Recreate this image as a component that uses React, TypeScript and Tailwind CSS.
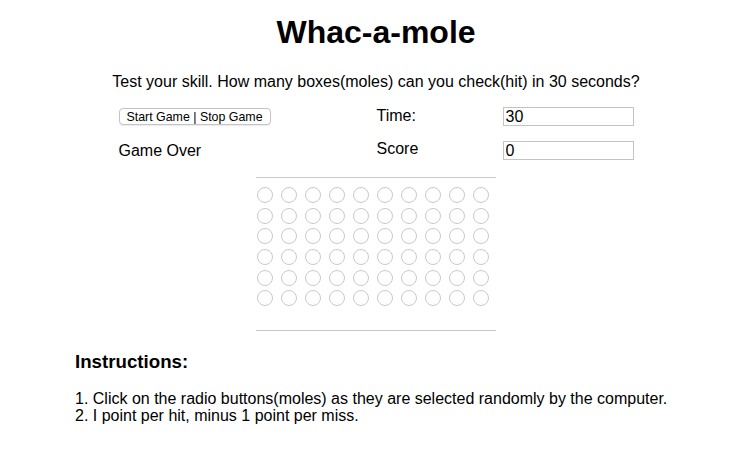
import React from "react";

export default function App() {
  const rows = Array.from({ length: 6 });
  const cols = Array.from({ length: 10 });
  return (
    <div
      className="w-[738px] h-[460px] bg-white text-black overflow-hidden"
      style={{ fontFamily: '"Liberation Sans", Arial, sans-serif' }}
    >
      <div className="flex flex-col items-center pl-[14px]">
        <h1 className="text-[32px] leading-[37px] font-bold mt-[14px]">Whac-a-mole</h1>
        <p className="text-[16px] leading-[18px] mt-[22px]">
          Test your skill. How many boxes(moles) can you check(hit) in 30 seconds?
        </p>
        <div className="grid grid-cols-[258px_126px_131px] grid-rows-[19px_19px] gap-y-[15px] mt-[16px] text-[16px] leading-[18px]">
          <div className="flex items-center">
            <button className="h-[17px] w-[152px] border border-[#c4c4c4] rounded-[4px] bg-white text-[12.4px] leading-[14px] text-black shadow-[0_1px_1px_rgba(0,0,0,0.08)]">
              Start Game | Stop Game
            </button>
          </div>
          <div className="flex items-center -mt-[1px]">Time:</div>
          <div>
            <input
              readOnly
              value="30"
              className="w-[131px] h-[19px] border border-[#c4c4c4] px-[2px] text-[16px] leading-[17px] outline-none"
            />
          </div>
          <div className="flex items-center mt-[1px]">Game Over</div>
          <div className="flex items-center -mt-[3px]">Score</div>
          <div>
            <input
              readOnly
              value="0"
              className="w-[131px] h-[19px] border border-[#c4c4c4] px-[2px] text-[16px] leading-[17px] outline-none"
            />
          </div>
        </div>
        <div className="w-[240px] mt-[17px] border-t border-b border-[#c8c8c8] pt-[9px] pb-[24px]">
          <div className="flex flex-col gap-y-[4.67px]">
            {rows.map((_, r) => (
              <div key={r} className="flex">
                {cols.map((_, c) => (
                  <div
                    key={c}
                    className="w-[16px] h-[16px] rounded-full border border-[#c9c9c9] bg-white ml-[1px] mr-[7px]"
                  />
                ))}
              </div>
            ))}
          </div>
        </div>
      </div>
      <div className="pl-[75px] mt-[20px]">
        <h2 className="text-[18.7px] leading-[21px] font-bold">Instructions:</h2>
        <div className="mt-[18px] text-[16px] leading-[17px]">
          <div>1. Click on the radio buttons(moles) as they are selected randomly by the computer.</div>
          <div>2. I point per hit, minus 1 point per miss.</div>
        </div>
      </div>
    </div>
  );
}
